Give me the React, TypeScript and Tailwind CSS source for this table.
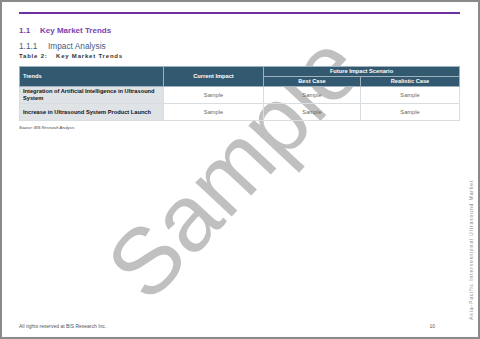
export default function App() {
  const rows = [
    { trend: "Integration of Artificial Intelligence in Ultrasound System", current: "Sample", best: "Sample", realistic: "Sample" },
    { trend: "Increase in Ultrasound System Product Launch", current: "Sample", best: "Sample", realistic: "Sample" },
  ];

  return (
    <div
      className="relative w-[480px] h-[339px] overflow-hidden bg-white border-2 border-[#8a8a8a]"
      style={{ fontFamily: '"Liberation Sans", Arial, sans-serif' }}
    >
      {/* watermark, sits behind the page content */}
      <div className="pointer-events-none absolute left-[232px] top-[165px] -translate-x-1/2 -translate-y-1/2 -rotate-[47deg] whitespace-nowrap text-[94px] leading-none text-[#c0c0c0]">
        Sample
      </div>

      <div className="relative z-10 flex flex-col h-full pl-[17px] pr-[18px] pt-[10px]">
        {/* top rule */}
        <div className="h-[2px] w-[441px] bg-[#7030a0]" />

        <h1 className="mt-[12px] flex text-[8px] font-bold leading-[10px] text-[#7a3fb0]">
          <span className="w-[21px]">1.1</span>
          <span>Key Market Trends</span>
        </h1>
        <h2 className="mt-[5px] flex text-[8.3px] leading-[10px] text-[#3f6085]">
          <span className="w-[29px]">1.1.1</span>
          <span>Impact Analysis</span>
        </h2>
        <div className="mt-[1px] flex text-[6px] font-bold tracking-[0.8px] leading-[9px] text-[#333]">
          <span className="w-[37px]">Table 2:</span>
          <span>Key Market Trends</span>
        </div>

        {/* table */}
        <table className="mt-[5px] w-[441px] border-collapse text-[5.7px] leading-[7px]">
          <thead>
            <tr className="h-[10px] bg-[#32596f] text-white">
              <th rowSpan={2} className="w-[144px] border border-[#9fb1bd] px-[3px] text-left font-bold">
                Trends
              </th>
              <th rowSpan={2} className="w-[100px] border border-[#9fb1bd] font-bold">
                Current Impact
              </th>
              <th colSpan={2} className="border border-[#9fb1bd] font-bold">
                Future Impact Scenario
              </th>
            </tr>
            <tr className="h-[10px] bg-[#32596f] text-white">
              <th className="w-[97px] border border-[#9fb1bd] font-bold">Best Case</th>
              <th className="border border-[#9fb1bd] font-bold">Realistic Case</th>
            </tr>
          </thead>
          <tbody>
            {rows.map((r, i) => (
              <tr key={i} className="h-[17px]">
                <td className="border border-[#d8dde1] bg-[#dfe3e6] px-[3px] font-bold text-[#111]">{r.trend}</td>
                <td className="border border-[#d8dde1] text-center text-[#666]">{r.current}</td>
                <td className="border border-[#d8dde1] text-center text-[#666]">{r.best}</td>
                <td className="border border-[#d8dde1] text-center text-[#666]">{r.realistic}</td>
              </tr>
            ))}
          </tbody>
        </table>
        <p className="mt-[4px] text-[4px] italic leading-[5px] text-[#444]">Source: BIS Research Analysis</p>

        <div className="flex-1" />

        {/* footer */}
        <div className="mb-[8px] flex w-[416px] justify-between text-[5px] leading-[6px] text-[#555]">
          <span>All rights reserved at BIS Research Inc.</span>
          <span>10</span>
        </div>
      </div>

      {/* side label */}
      <div className="absolute left-[470px] top-[248px] z-10 w-[140px] -translate-x-1/2 -translate-y-1/2 -rotate-90 whitespace-nowrap text-center text-[5px] tracking-[0.9px] text-[#888]">
        Asia-Pacific Interventional Ultrasound Market
      </div>
    </div>
  );
}
